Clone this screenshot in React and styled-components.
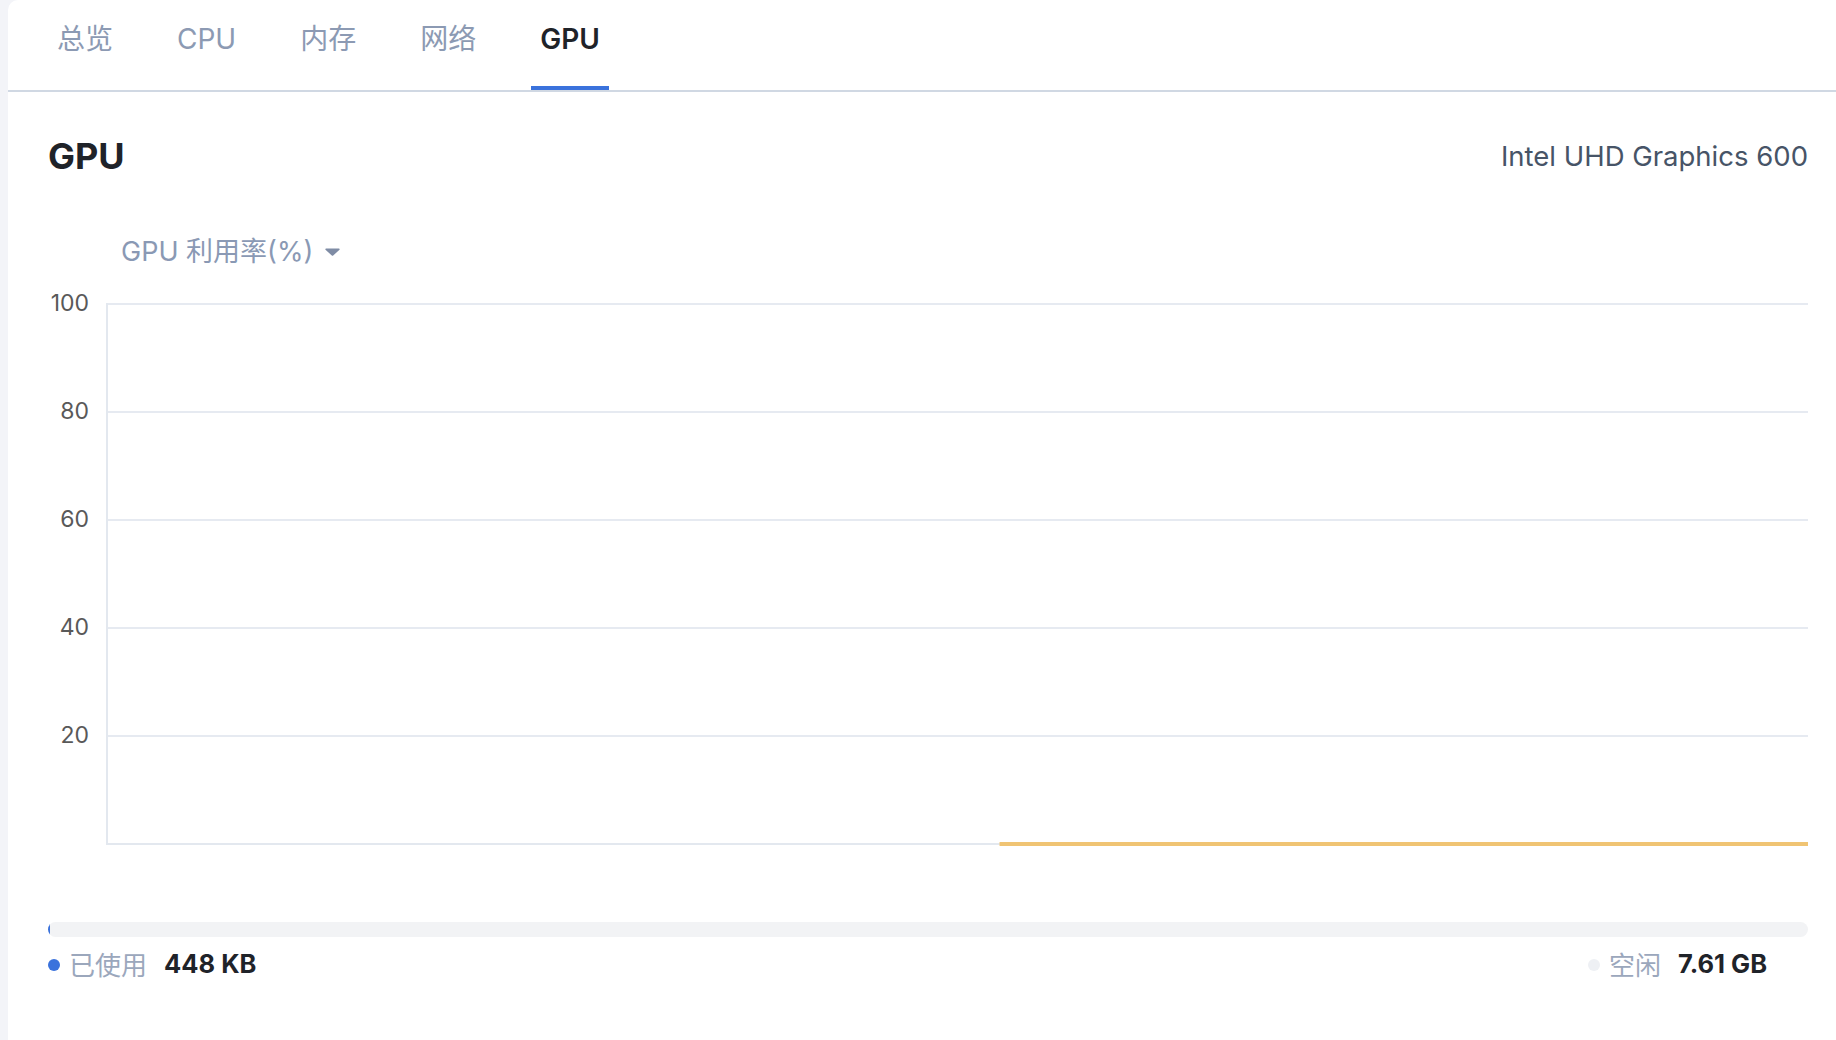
import React from "react";
import styled, { createGlobalStyle } from "styled-components";

const GlobalStyle = createGlobalStyle`
    body {
        margin: 0;
        background: #f3f4f8;
        font-family: "Inter", "Noto Sans CJK SC", sans-serif;
    }
`;

const Panel = styled.div`
    margin-left: 8px;
    min-height: 100vh;
    background: #ffffff;
    border-top-left-radius: 10px;
    padding: 0 28px 0 40px;
    box-sizing: border-box;
    overflow: hidden;
`;

const TabBar = styled.div`
    display: flex;
    gap: 46px;
    margin: 0 -28px 0 -40px;
    padding-left: 40px;
    border-bottom: 2px solid #d0d8e3;
`;

const Tab = styled.div`
    padding: 21px 9px 29px;
    font-size: 28px;
    line-height: 36px;
    color: ${(props) => (props.active ? "#1f2329" : "#8c9ab3")};
    font-weight: ${(props) => (props.active ? 600 : 400)};
    border-bottom: 4px solid ${(props) => (props.active ? "#3a72dc" : "transparent")};
`;

const Header = styled.div`
    display: flex;
    justify-content: space-between;
    align-items: center;
    margin-top: 42px;
    height: 44px;
`;

const Title = styled.h2`
    margin: 0;
    font-size: 36px;
    font-weight: 700;
    color: #1f2329;
`;

const DeviceName = styled.span`
    font-size: 27.5px;
    color: #475467;
`;

const MetricSelect = styled.div`
    display: flex;
    align-items: center;
    gap: 12px;
    margin: 56px 0 0 73px;
    font-size: 27px;
    line-height: 36px;
    color: #8a99b4;
`;

const Chart = styled.div`
    display: flex;
    margin-top: 33px;
`;

const YAxis = styled.div`
    width: 41px;
    margin-top: -14px;
    margin-right: 17px;
    display: flex;
    flex-direction: column;
`;

const Tick = styled.div`
    height: 108px;
    font-size: 23px;
    line-height: 28px;
    text-align: right;
    color: #595959;
`;

const Plot = styled.div`
    flex: 1;
    height: 544px;
`;

const Usage = styled.div`
    margin-top: 75px;
`;

const Bar = styled.div`
    height: 15px;
    border-radius: 8px;
    background: #f2f3f5;
    overflow: hidden;
`;

const BarFill = styled.div`
    height: 100%;
    background: #3a72dc;
`;

const Legend = styled.div`
    display: flex;
    justify-content: space-between;
    align-items: center;
    margin-top: 10px;
    padding-right: 41px;
    height: 32px;
`;

const LegendItem = styled.div`
    display: flex;
    align-items: center;
`;

const Dot = styled.span`
    width: 12px;
    height: 12px;
    border-radius: 50%;
    background: ${(props) => props.color};
    margin: 4px 9px 0 0;
`;

const Label = styled.span`
    font-size: 26px;
    color: #9ba7bc;
    margin-right: 17px;
`;

const Value = styled.span`
    font-size: 25.5px;
    font-weight: 700;
    color: #1f2329;
`;

const tabs = ["总览", "CPU", "内存", "网络", "GPU"];
const ticks = [100, 80, 60, 40, 20];

const App = () => {
    return (
        <>
            <GlobalStyle />
            <Panel>
                <TabBar>
                    {tabs.map((tab) => (
                        <Tab key={tab} active={tab === "GPU"}>
                            {tab}
                        </Tab>
                    ))}
                </TabBar>

                <Header>
                    <Title>GPU</Title>
                    <DeviceName>Intel UHD Graphics 600</DeviceName>
                </Header>

                <MetricSelect>
                    GPU 利用率(%)
                    <svg width="15" height="8" viewBox="0 0 15 8">
                        <path d="M1 0.5 H14 a0.8 0.8 0 0 1 0.5 1.3 L8.2 7.4 a1 1 0 0 1 -1.4 0 L0.5 1.8 A0.8 0.8 0 0 1 1 0.5z" fill="#7f8ca5" />
                    </svg>
                </MetricSelect>

                <Chart>
                    <YAxis>
                        {ticks.map((t) => (
                            <Tick key={t}>{t}</Tick>
                        ))}
                    </YAxis>
                    <Plot>
                        <svg width="100%" height="544">
                            {[1, 109, 217, 325, 433].map((y) => (
                                <line key={y} x1="0" x2="100%" y1={y} y2={y} stroke="#e6eaf1" strokeWidth="2" />
                            ))}
                            <line x1="1" x2="1" y1="0" y2="542" stroke="#e3e8ef" strokeWidth="2" />
                            <line x1="0" x2="100%" y1="541" y2="541" stroke="#e3e8ef" strokeWidth="2" />
                            <line x1="52.5%" x2="100%" y1="541" y2="541" stroke="#f0c473" strokeWidth="4" />
                        </svg>
                    </Plot>
                </Chart>

                <Usage>
                    <Bar>
                        <BarFill style={{ width: "0.1%" }} />
                    </Bar>
                    <Legend>
                        <LegendItem>
                            <Dot color="#3a72dc" />
                            <Label>已使用</Label>
                            <Value>448 KB</Value>
                        </LegendItem>
                        <LegendItem>
                            <Dot color="#eef0f4" />
                            <Label>空闲</Label>
                            <Value>7.61 GB</Value>
                        </LegendItem>
                    </Legend>
                </Usage>
            </Panel>
        </>
    );
};

export default App;
